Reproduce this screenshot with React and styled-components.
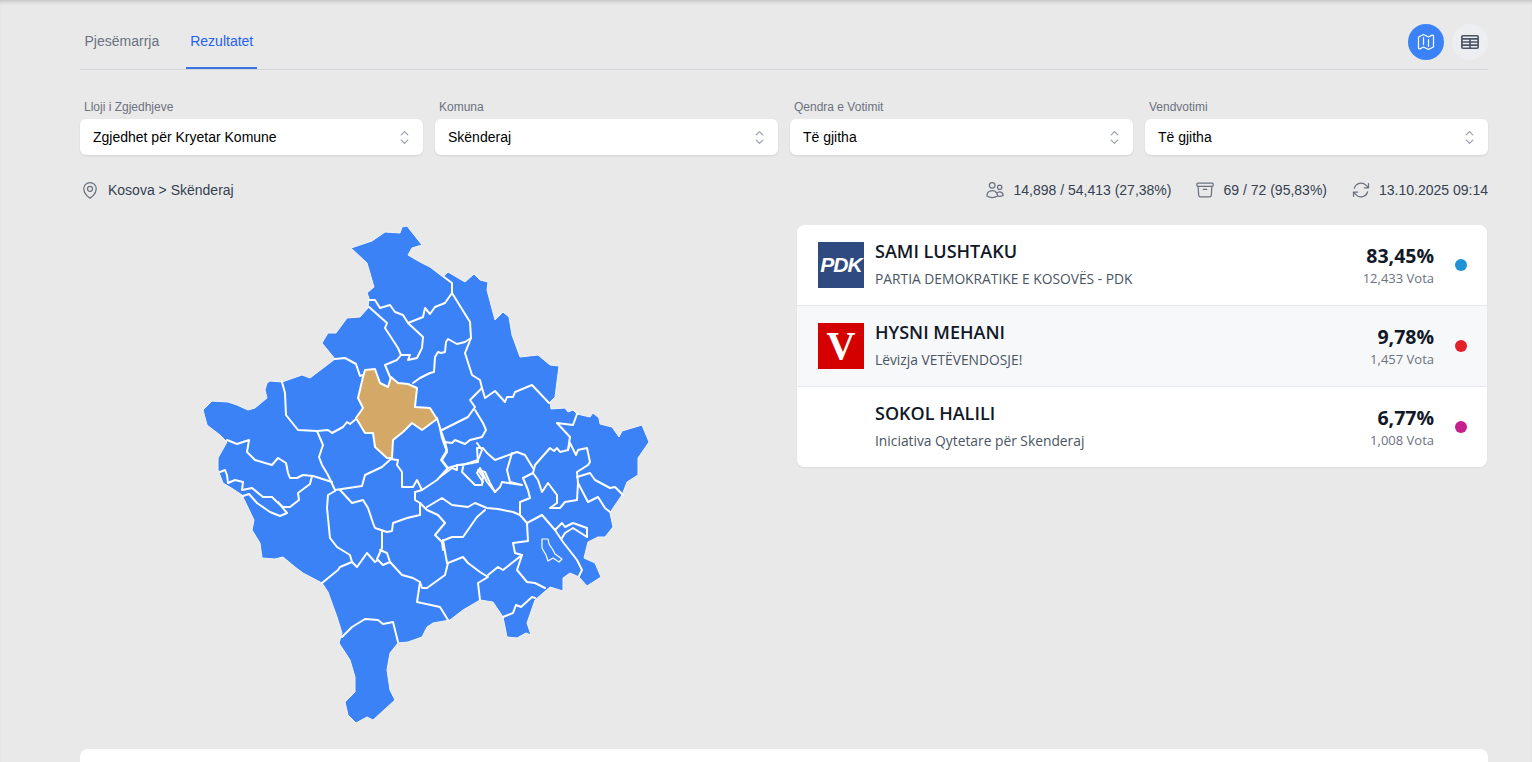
import React from 'react';
import styled, { createGlobalStyle } from 'styled-components';
import {
  HiOutlineMap,
  HiOutlineTableCells,
  HiOutlineMapPin,
  HiOutlineUsers,
  HiOutlineArchiveBox,
  HiOutlineArrowPath,
  HiOutlineChevronUpDown,
} from 'react-icons/hi2';

const GlobalStyle = createGlobalStyle`
  html, body { margin: 0; padding: 0; height: 100%; overflow: hidden; background: #e9e9e9; }
  body { font-family: "Liberation Sans", Arial, sans-serif; }
`;

const Page = styled.div`
  height: 762px;
  overflow: hidden;
  padding: 0 44px 0 80px;
  background: #e9e9e9;
  box-shadow: inset 0 4px 4px -3px rgba(0, 0, 0, 0.22);
`;

const TabBar = styled.div`
  display: flex;
  justify-content: space-between;
  align-items: flex-end;
  height: 69px;
  border-bottom: 1px solid #d1d5db;
`;

const Tabs = styled.div`
  display: flex;
  gap: 22.5px;
`;

const Tab = styled.div`
  padding: 0 4px 18px 4.5px;
  line-height: 16px;
  font-size: 14px;
  color: ${(p) => (p.$active ? '#2563eb' : '#6b7280')};
  border-bottom: 2px solid ${(p) => (p.$active ? '#3b74e0' : 'transparent')};
`;

const ViewButtons = styled.div`
  display: flex;
  gap: 8px;
  margin-bottom: 9px;
`;

const RoundButton = styled.div`
  width: 36px;
  height: 36px;
  border-radius: 50%;
  display: flex;
  align-items: center;
  justify-content: center;
  font-size: 20px;
  background: ${(p) => (p.$active ? '#3b82f6' : '#eceef1')};
  color: ${(p) => (p.$active ? '#fff' : '#4b5563')};
  svg { stroke-width: ${(p) => (p.$active ? 1.5 : 2)}; }
`;

const Filters = styled.div`
  display: grid;
  grid-template-columns: repeat(4, 1fr);
  gap: 12px;
  margin-top: 30px;
`;

const Field = styled.div`
  display: flex;
  flex-direction: column;
`;

const FieldLabel = styled.div`
  font-size: 12px;
  line-height: 14px;
  color: #6b7280;
  padding-left: 4px;
  margin-bottom: 5px;
`;

const SelectBox = styled.div`
  height: 36px;
  box-sizing: border-box;
  padding: 0 13px;
  background: #fff;
  border-radius: 6px;
  box-shadow: 0 1px 2px rgba(0, 0, 0, 0.1);
  display: flex;
  align-items: center;
  justify-content: space-between;
  font-size: 14px;
  color: #000;
  svg { font-size: 21px; color: #9ca3af; margin-right: -4.5px; }
`;

const InfoRow = styled.div`
  display: flex;
  justify-content: space-between;
  align-items: center;
  height: 20px;
  margin-top: 25px;
  font-size: 14px;
  color: #374151;
`;

const Place = styled.div`
  display: flex;
  align-items: center;
  gap: 8px;
  svg { font-size: 20px; color: #6b7280; }
`;

const Stats = styled.div`
  display: flex;
  gap: 24px;
`;

const Stat = styled.div`
  display: flex;
  align-items: center;
  gap: 8px;
  svg { font-size: 20px; color: #6b7280; }
`;

const Content = styled.div`
  display: grid;
  grid-template-columns: 705px 691px;
  column-gap: 12px;
  margin-top: 25px;
`;

const MapSvg = styled.svg`
  display: block;
  width: 705px;
  height: 529px;
  margin-top: -5px;
`;

const ResultsCard = styled.div`
  align-self: start;
  width: 690px;
  background: #fff;
  border-radius: 8px;
  overflow: hidden;
  box-shadow: 0 1px 2px rgba(0, 0, 0, 0.06);
  font-family: "Open Sans", "Noto Sans", sans-serif;
`;

const Row = styled.div`
  display: grid;
  grid-template-columns: 46px 1fr auto 12px;
  align-items: center;
  column-gap: 11px;
  height: 80px;
  box-sizing: content-box;
  padding: 0 20px 0 21px;
  background: ${(p) => (p.$shaded ? '#f7f8fa' : '#fff')};
  border-top: ${(p) => (p.$first ? 'none' : '1px solid #e5e7eb')};
`;

const Logo = styled.div`
  width: 46px;
  height: 46px;
  display: flex;
  align-items: center;
  justify-content: center;
  background: ${(p) => p.$bg || 'transparent'};
  color: #fff;
`;

const PdkMark = styled.span`
  font-family: "Liberation Sans", sans-serif;
  font-size: 21px;
  font-weight: 700;
  font-style: italic;
  letter-spacing: -1px;
`;

const VMark = styled.span`
  font-family: "Liberation Serif", serif;
  font-size: 40px;
  font-weight: 700;
  line-height: 46px;
`;

const Names = styled.div`
  display: flex;
  flex-direction: column;
  gap: 6px;
  padding-bottom: 2px;
`;

const Candidate = styled.div`
  font-size: 18px;
  line-height: 24px;
  font-weight: 600;
  color: #111827;
`;

const PartyName = styled.div`
  font-size: 13.8px;
  line-height: 20px;
  font-weight: 500;
  color: #4b5563;
`;

const Numbers = styled.div`
  display: flex;
  flex-direction: column;
  align-items: flex-end;
  margin-right: 10px;
`;

const Percent = styled.div`
  font-size: 19.5px;
  line-height: 26px;
  font-weight: 700;
  color: #111827;
`;

const Votes = styled.div`
  font-size: 13px;
  line-height: 18px;
  color: #6b7280;
`;

const Dot = styled.div`
  width: 12px;
  height: 12px;
  border-radius: 50%;
  background: ${(p) => p.$color};
`;

const BottomCard = styled.div`
  height: 60px;
  background: #fff;
  border-radius: 8px;
`;

const OUTLINE = `351,248 372,241 385,232 400,233 402,227 407,226 422,245 412,248 408,255 420,262 430,267 443,277 448,272 465,282 474,274 480,280 488,282 487,290 495,320 503,312 509,317 512,335 520,357 538,355 550,365 559,366 555,397 550,402 551,409 565,408 568,412 573,410 577,414 590,417 593,413 599,418 600,424 612,427 619,437 622,431 642,425 649,442 638,458 638,475 627,482 622,495 613,508 610,513 613,527 605,537 598,537 588,542 584,558 595,563 601,577 587,586 579,577 570,573 563,578 563,591 550,587 535,600 527,623 531,635 526,633 517,638 507,637 503,617 493,602 480,600 463,610 450,620 433,623 427,627 422,637 408,642 398,643 390,653 387,670 390,690 395,700 373,720 367,717 356,723 348,715 345,702 355,692 355,677 350,660 339,643 342,633 337,617 328,592 322,583 303,573 295,567 283,557 275,559 262,558 260,543 252,530 254,520 242,495 233,489 223,483 218,470 218,458 227,442 220,435 207,425 203,410 212,401 228,402 237,405 248,410 255,408 267,398 265,390 267,383 270,381 282,382 302,375 310,378 335,359 322,343 328,333 336,333 347,318 360,317 368,308 369,298 367,293 374,287 367,263`;

const SKENDERAJ = `365,370 375,369 380,383 388,387 391,377 398,383 408,384 417,388 415,407 430,408 437,419 422,430 412,423 403,432 393,440 392,458 387,458 375,447 373,433 365,433 356,418 363,408 358,398 363,377`;

const LAKE = `542,539 548,539 549,544 553,550 555,554 562,559 559,562 553,558 548,561 546,555 542,548`;

const BORDERS = [
  '369,300 375,300 380,308 390,305 395,312 403,315 408,323 423,317 425,308 430,314 435,307 445,303 452,293 452,283 444,277',
  '452,293 470,322 471,338 465,353 472,375 480,380 482,388 485,398 495,391 505,402 507,397 513,397 515,392 532,385 549,403',
  '369,307 387,323 385,328 398,348 401,355 397,360 385,365 390,377',
  '408,323 423,337 422,348 417,358 408,360 410,355 401,355',
  '471,338 465,342 457,344 448,339 446,342 445,352 441,353 438,352 435,357 434,372 430,373 420,378 413,383',
  '282,382 285,393 286,415 298,430 317,431 328,430 332,433 343,427 347,422 350,424 356,419',
  '335,359 345,358 356,364 360,376 363,375',
  '317,431 323,445 319,457 322,465 328,475 335,490',
  '227,440 237,444 249,440 247,452 255,460 272,465 278,458 286,463 288,473 290,478 297,478 303,475 313,476 332,482',
  '220,472 225,470 227,475 228,483 235,480 243,482 242,490 252,488 263,497 272,497 277,502 283,507 290,507 299,500 298,493 310,484 312,476',
  '243,496 249,494 257,503 270,512 280,516 287,513 278,502',
  '335,491 328,495 327,508 330,538 337,547 350,555 352,562 340,567 338,570 322,583',
  '335,490 362,486 365,475 382,467 392,458',
  '340,490 352,503 363,500 368,508 373,523 375,528 387,532 392,531 393,523 407,518 420,515',
  '382,532 382,548 377,559 383,565 390,562 387,553 380,550',
  '352,562 357,567 367,553 375,562 378,560',
  '390,562 402,575 413,578 420,582 422,588 427,588 445,575 448,563 463,557 468,563 480,572 488,577 478,583 480,600',
  '420,582 417,602 440,607 448,620',
  '342,637 352,627 365,619 378,620 383,624 393,622 398,642',
  '443,540 447,563',
  '488,575 498,567 503,570 522,555 515,553 513,543 528,541 527,523 520,515 520,502 530,498 528,490 523,478 533,473 538,480 542,492 548,483 557,495 557,503 550,508 560,508 565,502 577,500 578,483 577,472 588,465 590,462 587,448 578,450 576,455 570,443 568,450 560,452 557,448 554,451 550,448 535,465 533,473',
  '522,555 517,570 527,582 535,583 545,588',
  '535,598 532,597 521,607 516,605 513,613 503,617',
  '527,523 542,515 555,530 563,542 577,560 582,570 579,576',
  '555,530 562,523 565,527 573,523 587,528 587,537 573,528 565,533 562,538',
  '577,414 573,425 557,423 570,437 568,450',
  '577,477 590,473 595,480 610,488 615,487 623,495',
  '578,483 588,502 598,497 605,508 610,512',
  '533,468 525,455 517,452 495,460 487,453 483,448 477,448 478,462 470,463',
  '512,453 507,470 510,482 522,485 502,482 500,487 495,492 487,482 480,468 477,473 483,482',
  '390,459 398,460 397,465 402,472 402,487 413,487 417,480 422,490 437,480 448,468 442,460 447,452 442,438 440,428 437,418',
  '442,430 468,417 475,407 470,400 482,388',
  '475,410 483,423 486,430 482,437 470,440 465,444 455,440 452,443 445,442 440,428',
  '477,443 482,450 478,460 463,465 457,465 457,470 452,468 440,477',
  '445,442 447,450 441,460 447,468',
  '448,468 458,465 473,463',
  '463,467 462,472 468,478 475,485 482,485 483,477 478,470 485,472 490,483 495,492',
  '422,490 415,492 415,500 420,503 420,515',
  '420,503 427,510 438,515 445,523 435,535 442,542 443,550',
  '427,507 442,498 452,505 468,507 475,503 487,508 498,509 513,512 520,515',
  '442,541 452,537 463,537 477,517 485,510',
];

const VIEW_BOX = '80 220 705 529';

const filters = [
  { label: 'Lloji i Zgjedhjeve', value: 'Zgjedhet për Kryetar Komune' },
  { label: 'Komuna', value: 'Skënderaj' },
  { label: 'Qendra e Votimit', value: 'Të gjitha' },
  { label: 'Vendvotimi', value: 'Të gjitha' },
];

const results = [
  { name: 'SAMI LUSHTAKU', party: 'PARTIA DEMOKRATIKE E KOSOVËS - PDK', pct: '83,45%', votes: '12,433 Vota', color: '#2092d6', logo: 'pdk' },
  { name: 'HYSNI MEHANI', party: 'Lëvizja VETËVENDOSJE!', pct: '9,78%', votes: '1,457 Vota', color: '#e3202a', logo: 'v' },
  { name: 'SOKOL HALILI', party: 'Iniciativa Qytetare për Skenderaj', pct: '6,77%', votes: '1,008 Vota', color: '#c71f8c' },
];

function PartyLogo({ kind }) {
  if (kind === 'pdk') return <Logo $bg="#2f4a7f"><PdkMark>PDK</PdkMark></Logo>;
  if (kind === 'v') return <Logo $bg="#d40000"><VMark>V</VMark></Logo>;
  return <Logo />;
}

function KosovoMap() {
  return (
    <MapSvg viewBox={VIEW_BOX}>
      <polygon points={OUTLINE} fill="#3b82f6" stroke="#f4f4f4" strokeWidth="1" strokeLinejoin="round" />
      <polygon points={SKENDERAJ} fill="#d4a866" stroke="#fff" strokeWidth="2" strokeLinejoin="round" />
      {BORDERS.map((b) => (
        <polyline key={b} points={b} fill="none" stroke="#fff" strokeWidth="2" strokeLinejoin="round" strokeLinecap="round" />
      ))}
      <polygon points={LAKE} fill="none" stroke="#fff" strokeWidth="1.2" strokeLinejoin="round" />
    </MapSvg>
  );
}

export default function App() {
  return (
    <>
      <GlobalStyle />
      <Page>
        <TabBar>
          <Tabs>
            <Tab>Pjesëmarrja</Tab>
            <Tab $active>Rezultatet</Tab>
          </Tabs>
          <ViewButtons>
            <RoundButton $active><HiOutlineMap /></RoundButton>
            <RoundButton><HiOutlineTableCells /></RoundButton>
          </ViewButtons>
        </TabBar>

        <Filters>
          {filters.map((f) => (
            <Field key={f.label}>
              <FieldLabel>{f.label}</FieldLabel>
              <SelectBox>
                {f.value}
                <HiOutlineChevronUpDown />
              </SelectBox>
            </Field>
          ))}
        </Filters>

        <InfoRow>
          <Place><HiOutlineMapPin />Kosova &gt; Skënderaj</Place>
          <Stats>
            <Stat><HiOutlineUsers />14,898 / 54,413 (27,38%)</Stat>
            <Stat><HiOutlineArchiveBox />69 / 72 (95,83%)</Stat>
            <Stat><HiOutlineArrowPath />13.10.2025 09:14</Stat>
          </Stats>
        </InfoRow>

        <Content>
          <KosovoMap />
          <ResultsCard>
            {results.map((r, i) => (
              <Row key={r.name} $first={i === 0} $shaded={i === 1}>
                <PartyLogo kind={r.logo} />
                <Names>
                  <Candidate>{r.name}</Candidate>
                  <PartyName>{r.party}</PartyName>
                </Names>
                <Numbers>
                  <Percent>{r.pct}</Percent>
                  <Votes>{r.votes}</Votes>
                </Numbers>
                <Dot $color={r.color} />
              </Row>
            ))}
          </ResultsCard>
        </Content>

        <BottomCard />
      </Page>
    </>
  );
}
